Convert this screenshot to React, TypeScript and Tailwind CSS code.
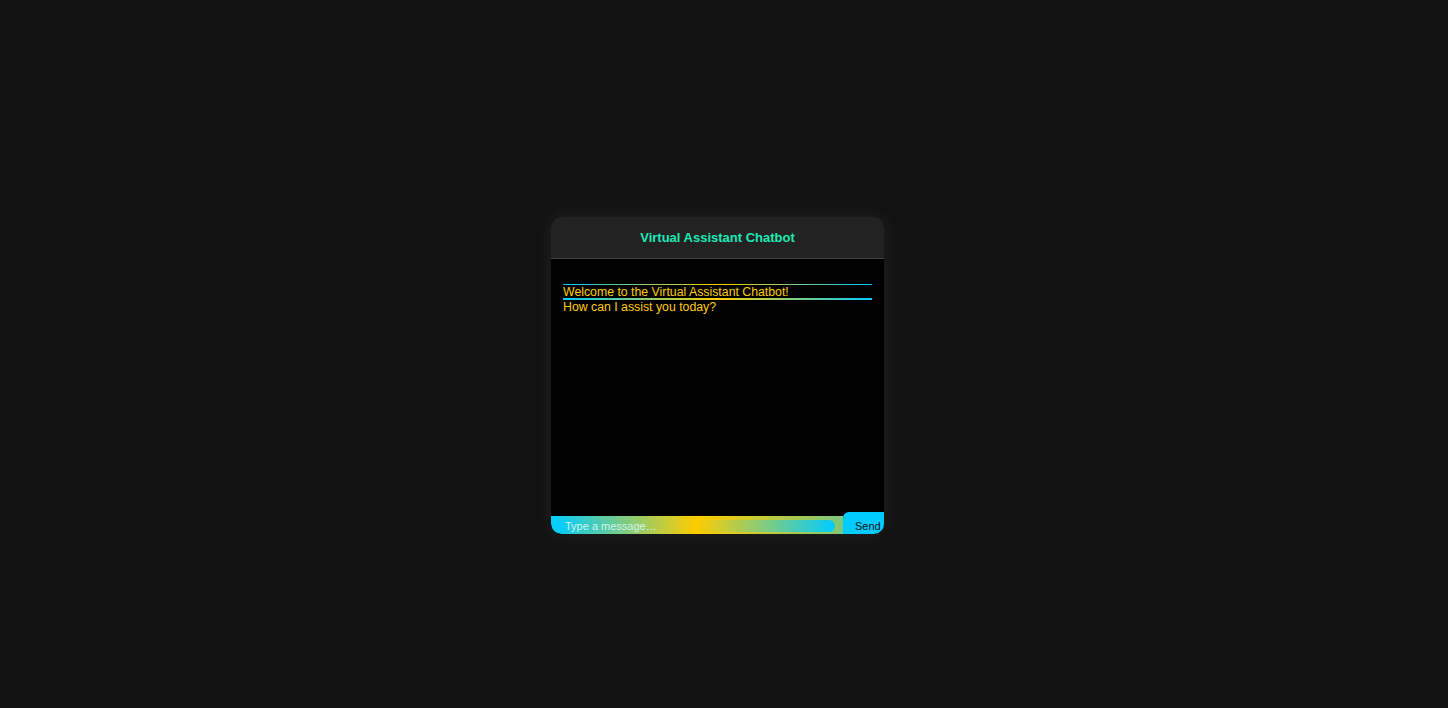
import React from "react";

const lineGradient =
  "bg-[linear-gradient(90deg,#00ccff_0%,#ffcc00_50%,#00ccff_100%)]";

const ChatMessage = () => {
  return (
    <div className="flex flex-col">
      <div className={`h-px ${lineGradient}`} />
      <p className="text-[12.3px] leading-[12px] pt-px text-[#ffcc00]">
        Welcome to the Virtual Assistant Chatbot!
      </p>
      <div className={`h-[2px] ${lineGradient}`} />
      <p className="text-[12.3px] leading-[14px] text-[#ffcc00]">
        How can I assist you today?
      </p>
    </div>
  );
};

const App = () => {
  return (
    <div className="min-h-screen bg-[#121212] flex justify-center pt-[217px] font-['Liberation_Sans',Arial,sans-serif]">
      <div className="w-[333px] h-[317px] mr-[13px] rounded-[10px] overflow-hidden flex flex-col bg-black shadow-[0_0_18px_rgba(255,255,255,0.07)]">
        <div className="h-[42px] shrink-0 bg-[#222222] border-b border-[#444444] flex items-center justify-center">
          <h1 className="text-[13px] font-bold text-[#1de9b6]">
            Virtual Assistant Chatbot
          </h1>
        </div>
        <div className="flex-1 px-3 pt-[25px]">
          <ChatMessage />
        </div>
        <div className="h-[22px] shrink-0 flex items-end">
          <div className="flex-1 h-[18px] flex items-center rounded-bl-[10px] bg-[linear-gradient(90deg,#00ccff_0%,#ffcc00_50%,#7cc87c_100%)] pl-[6px] pr-[8px]">
            <input
              type="text"
              placeholder="Type a message…"
              className="flex-1 min-w-0 h-[12px] mt-[1px] rounded-[6px] px-2 text-[11px] leading-[12px] outline-none bg-[linear-gradient(90deg,#00ccff_0%,#ffcc00_50%,#00ccff_100%)] text-white placeholder:text-[#d2f4f0]"
            />
          </div>
          <button className="w-[41px] h-[22px] bg-[#00ccff] rounded-tl-[6px] pl-3 pt-[5px] text-left text-[11px] leading-[12px] text-[#111111]">
            Send
          </button>
        </div>
      </div>
    </div>
  );
};

export default App;
